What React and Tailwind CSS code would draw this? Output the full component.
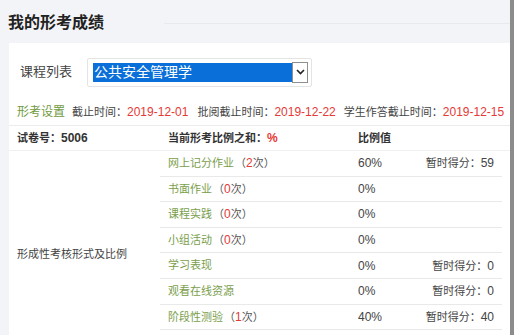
import React from 'react';

const font = { fontFamily: '"Liberation Sans", "Noto Sans CJK SC", sans-serif' };

const rows = [
  { name: '网上记分作业', count: 2, ratio: '60%', score: '59' },
  { name: '书面作业', count: 0, ratio: '0%' },
  { name: '课程实践', count: 0, ratio: '0%' },
  { name: '小组活动', count: 0, ratio: '0%' },
  { name: '学习表现', ratio: '0%', score: '0' },
  { name: '观看在线资源', ratio: '0%', score: '0' },
  { name: '阶段性测验', count: 1, ratio: '40%', score: '40' },
];

const App = () => {
  return (
    <div className="w-[514px] h-[335px] overflow-hidden flex bg-[#f3f4f8] text-[#333]" style={font}>
      <div className="w-[510px] flex flex-col">
        {/* title */}
        <div className="h-[43px] flex items-center pl-[8px] pt-[3px]">
          <h1 className="text-[16px] font-bold text-[#222] leading-none">我的形考成绩</h1>
          <div className="flex-1 h-px bg-[#e8e9ee] ml-[60px]" />
        </div>

        <div className="flex-1 ml-[9px] bg-white flex flex-col">
          {/* course select */}
          <div className="h-[46px] flex items-center pt-[12px]">
            <span className="ml-[11px] text-[13px] text-[#444]">课程列表</span>
            <div className="ml-[15px] w-[225px] h-[29px] border border-[#e4e4e4] rounded-[2px] flex items-center pl-[5px] pr-[3px]">
              <div className="w-[200px] h-[19px] bg-[#0a6fd8] text-white text-[14px] leading-[19px] pl-[1px]">公共安全管理学</div>
              <div className="w-[16px] h-[21px] border border-[#8f8f8f] bg-white flex items-center justify-center">
                <svg width="9" height="6" viewBox="0 0 9 6">
                  <path d="M1 1 L4.5 4.5 L8 1" stroke="#222" strokeWidth="1.6" fill="none" />
                </svg>
              </div>
            </div>
          </div>

          {/* settings */}
          <div className="h-[37px] flex items-center pt-[10px] text-[11px] whitespace-nowrap border-b border-[#ececec]">
            <span className="ml-[8px] text-[12px] text-[#6f9a3f]">形考设置</span>
            <span className="ml-[7px] text-[#444]">截止时间：</span>
            <span className="text-[12px] text-[#e53935]">2019-12-01</span>
            <span className="ml-[9px] text-[#444]">批阅截止时间：</span>
            <span className="text-[12px] text-[#e53935]">2019-12-22</span>
            <span className="ml-[8px] text-[#444]">学生作答截止时间：</span>
            <span className="text-[12px] text-[#e53935]">2019-12-15</span>
          </div>

          {/* header */}
          <div className="h-[25px] flex items-center text-[11px] font-bold text-[#333] border-b border-[#f0f0f0]">
            <div className="w-[151px] pl-[8px]">试卷号：<span className="text-[12px]">5006</span></div>
            <div className="w-[190px] pl-[8px]">当前形考比例之和：<span className="text-[12px] text-[#e53935]">%</span></div>
            <div className="pl-[8px]">比例值</div>
          </div>

          {/* body */}
          <div className="flex">
            <div className="w-[151px] pl-[8px] pt-[95px] text-[11px] text-[#444]">形成性考核形式及比例</div>
            <div className="w-[342px] flex flex-col">
              {rows.map((r) => (
                <div key={r.name} className="h-[25.6px] flex items-center border-b border-[#e9e9e9] text-[11px]">
                  <div className="w-[190px] pl-[8px] text-[#7a9e4c]">
                    {r.name}
                    {r.count !== undefined && (
                      <span className="text-[#555] ml-[1px]">（<span className="text-[12px] text-[#e53935]">{r.count}</span>次）</span>
                    )}
                  </div>
                  <div className="w-[60px] pl-[8px] text-[12px] text-[#444]">{r.ratio}</div>
                  <div className="flex-1 text-right pr-[8px] text-[#444]">
                    {r.score !== undefined && (
                      <>暂时得分：<span className="text-[12px]">{r.score}</span></>
                    )}
                  </div>
                </div>
              ))}
            </div>
          </div>
        </div>
      </div>
      {/* scrollbar edge */}
      <div className="w-[4px] bg-[#8c8c8c]" />
    </div>
  );
};

export default App;
